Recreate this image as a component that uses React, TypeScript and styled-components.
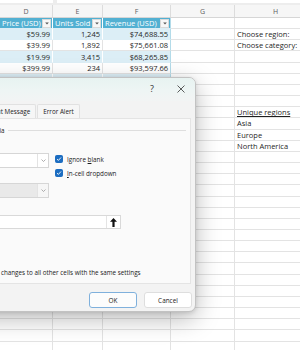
import React from "react";
import styled, { createGlobalStyle } from "styled-components";

const Global = createGlobalStyle`
  html, body { margin: 0; padding: 0; background: #ffffff; }
  body { width: 300px; height: 350px; overflow: hidden; font-family: "Open Sans", "Noto Sans", sans-serif; }
  #root { position: relative; width: 300px; height: 350px; overflow: hidden; }
`;

const COLS = [53, 50, 68, 64, 82];
const LETTERS = ["D", "E", "F", "G", "H"];
const ROW_H = 11.17;

type Kind = "head" | "band" | "plain" | "none";

const Sheet = styled.div`
  width: 300px;
  height: 350px;
  overflow: hidden;
  display: flex;
  flex-direction: column;
`;

const TopStrip = styled.div`
  height: 5px;
  flex-shrink: 0;
  background: #ededed;
  display: flex;
  gap: 4px;
  align-items: flex-start;
`;

const TopBox = styled.div<{ $w: number }>`
  width: ${(p) => p.$w}px;
  height: 3px;
  background: #ffffff;
  flex-shrink: 0;
`;

const ColHeaderRow = styled.div`
  display: flex;
  height: 13px;
  flex-shrink: 0;
  background: #f6f6f6;
  border-bottom: 1px solid #d6d6d6;
  box-sizing: border-box;
`;

const ColHeader = styled.div<{ $w: number }>`
  width: ${(p) => p.$w}px;
  flex-shrink: 0;
  box-sizing: border-box;
  border-right: 1px solid #dcdcdc;
  font-size: 7px;
  color: #5e5e5e;
  display: flex;
  align-items: center;
  justify-content: center;
`;

const GridRow = styled.div`
  display: flex;
  height: ${ROW_H}px;
  flex-shrink: 0;
`;

const Cell = styled.div<{ $w: number; $kind: Kind; $right?: boolean; $edge?: boolean }>`
  width: ${(p) => p.$w}px;
  flex-shrink: 0;
  box-sizing: border-box;
  display: flex;
  align-items: center;
  justify-content: ${(p) => (p.$right ? "flex-end" : "flex-start")};
  padding: 0 2px;
  font-size: 7.5px;
  white-space: nowrap;
  overflow: visible;
  color: ${(p) => (p.$kind === "head" ? "#ffffff" : "#1f1f1f")};
  background: ${(p) =>
    p.$kind === "head" ? "#52b0d2" : p.$kind === "band" ? "#dceef6" : "#ffffff"};
  border-bottom: 1px solid
    ${(p) => (p.$kind === "head" || p.$kind === "band" ? "#dceef6" : "#e3e3e3")};
  border-right: 1px solid
    ${(p) =>
      p.$edge
        ? "#b3dbe9"
        : p.$kind === "head" || p.$kind === "band"
        ? "#ffffff"
        : "#e3e3e3"};
`;

const Underlined = styled.span`
  text-decoration: underline;
  text-underline-offset: 1px;
`;

const FilterBtn = styled.div`
  margin-left: auto;
  margin-right: -1px;
  width: 9px;
  height: 9px;
  box-sizing: border-box;
  background: #f7f7f7;
  border: 1px solid #d9d9d9;
  display: flex;
  align-items: center;
  justify-content: center;
`;

/* ---------- Dialog ---------- */

const Dialog = styled.div`
  position: absolute;
  top: 77px;
  left: -62px;
  width: 258px;
  height: 235px;
  box-sizing: border-box;
  background: #f3f3f3;
  border: 1px solid #c2c2c2;
  border-radius: 7px;
  box-shadow: 0 7px 24px rgba(0, 0, 0, 0.27), 0 1px 4px rgba(0, 0, 0, 0.12);
  overflow: hidden;
  display: flex;
  flex-direction: column;
  font-family: "Open Sans", "Noto Sans", sans-serif;
  color: #1b1b1b;
`;

const TitleBar = styled.div`
  height: 23px;
  flex-shrink: 0;
  box-sizing: border-box;
  display: flex;
  align-items: flex-start;
  gap: 9px;
  padding: 5px 4px 0 8px;
  background: linear-gradient(180deg, #e7f3f1 0%, #eef5f4 55%, #f2f4f4 100%);
`;

const TitleText = styled.div`
  margin-right: auto;
  font-size: 6.8px;
  line-height: 11px;
`;

const TitleButton = styled.div`
  width: 20px;
  height: 11px;
  display: flex;
  align-items: center;
  justify-content: center;
  font-size: 9px;
  color: #333333;
`;

const TabStrip = styled.div`
  height: 17px;
  flex-shrink: 0;
  box-sizing: border-box;
  display: flex;
  align-items: flex-end;
  gap: 1px;
  padding: 0 0 0 6px;
`;

const Tab = styled.div<{ $active?: boolean }>`
  height: 14px;
  box-sizing: border-box;
  padding: 0 5px;
  font-size: 6.3px;
  line-height: 13px;
  white-space: nowrap;
  background: ${(p) => (p.$active ? "#fafafa" : "#f6f6f6")};
  border: 1px solid #e1e1e1;
  border-bottom: none;
  border-radius: 2px 2px 0 0;
`;

const Panel = styled.div`
  margin: 0 4px;
  height: 166px;
  flex-shrink: 0;
  box-sizing: border-box;
  background: #fafafa;
  border: 1px solid #e4e4e4;
  padding: 7px 4px 0 9px;
  display: flex;
  flex-direction: column;
`;

const GroupHeader = styled.div`
  display: flex;
  align-items: center;
  gap: 3px;
  height: 8px;
  font-size: 6.3px;
  white-space: nowrap;
`;

const GroupLine = styled.div`
  flex: 1;
  height: 1px;
  background: #dedede;
`;

const Criteria = styled.div`
  padding-left: 10px;
  display: flex;
  flex-direction: column;
`;

const FieldLabel = styled.div<{ $mt: number; $w?: number }>`
  margin-top: ${(p) => p.$mt}px;
  height: 9px;
  line-height: 9px;
  font-size: 6.3px;
  width: ${(p) => (p.$w ? `${p.$w}px` : "auto")};
  flex-shrink: 0;
`;

const FieldRow = styled.div<{ $mt: number; $h: number }>`
  display: flex;
  align-items: flex-start;
  margin-top: ${(p) => p.$mt}px;
  height: ${(p) => p.$h}px;
`;

const Select = styled.div<{ $disabled?: boolean }>`
  width: 86px;
  height: 15px;
  flex-shrink: 0;
  box-sizing: border-box;
  display: flex;
  background: ${(p) => (p.$disabled ? "#e9e9e9" : "#ffffff")};
  border: 1px solid #d6d6d6;
`;

const SelectValue = styled.div<{ $disabled?: boolean }>`
  flex: 1;
  font-size: 6.3px;
  line-height: 13px;
  padding-left: 3px;
  color: ${(p) => (p.$disabled ? "#8a8a8a" : "#1b1b1b")};
`;

const SelectButton = styled.div<{ $disabled?: boolean }>`
  width: 11px;
  box-sizing: border-box;
  border-left: 1px solid #e3e3e3;
  background: ${(p) => (p.$disabled ? "#f6f6f6" : "#ffffff")};
  display: flex;
  align-items: center;
  justify-content: center;
`;

const CheckItem = styled.label<{ $ml: number; $mt: number }>`
  display: flex;
  align-items: center;
  gap: 4px;
  margin-left: ${(p) => p.$ml}px;
  margin-top: ${(p) => p.$mt}px;
  height: 8px;
  font-size: 6.3px;
  white-space: nowrap;
`;

const Box = styled.span<{ $checked?: boolean }>`
  width: 8px;
  height: 8px;
  flex-shrink: 0;
  box-sizing: border-box;
  border-radius: 1.5px;
  background: ${(p) => (p.$checked ? "#1c6dc1" : "#ffffff")};
  border: 1px solid ${(p) => (p.$checked ? "#1c6dc1" : "#8a8a8a")};
  display: flex;
  align-items: center;
  justify-content: center;
`;

const SourceInput = styled.div`
  width: 158px;
  height: 14px;
  margin-top: 5px;
  box-sizing: border-box;
  display: flex;
  background: #ffffff;
  border: 1px solid #d9d9d9;
`;

const SourceValue = styled.div`
  flex: 1;
  font-size: 6.3px;
  line-height: 12px;
  padding-left: 3px;
`;

const RefButton = styled.div`
  width: 14px;
  box-sizing: border-box;
  border-left: 1px solid #e4e4e4;
  display: flex;
  align-items: center;
  justify-content: center;
`;

const Footer = styled.div`
  flex: 1;
  display: flex;
  justify-content: flex-end;
  align-items: flex-start;
  gap: 7px;
  padding: 8px 3px 0 0;
`;

const Button = styled.div<{ $primary?: boolean }>`
  width: 48px;
  height: 16px;
  box-sizing: border-box;
  border-radius: 3px;
  display: flex;
  align-items: center;
  justify-content: center;
  font-size: 6.4px;
  color: #1b1b1b;
  background: ${(p) => (p.$primary ? "#fcfcfc" : "#ffffff")};
  border: 1px solid ${(p) => (p.$primary ? "#7fb0dc" : "#dedede")};
`;

const Check = () => (
  <svg width="6" height="6" viewBox="0 0 6 6">
    <path d="M1 3.1 L2.4 4.4 L5 1.5" fill="none" stroke="#ffffff" strokeWidth="0.9" />
  </svg>
);

const Chevron = () => (
  <svg width="5" height="3" viewBox="0 0 5 3">
    <path d="M0.5 0.5 L2.5 2.5 L4.5 0.5" fill="none" stroke="#8c8c8c" strokeWidth="0.7" />
  </svg>
);

const Tri = () => (
  <svg width="4" height="3" viewBox="0 0 4 3">
    <path d="M0.2 0.4 L3.8 0.4 L2 2.5 Z" fill="#555555" />
  </svg>
);

const UpArrow = () => (
  <svg width="7" height="9" viewBox="0 0 7 9">
    <path d="M3.5 0 L7 3.8 L4.6 3.8 L4.6 9 L2.4 9 L2.4 3.8 L0 3.8 Z" fill="#111111" />
  </svg>
);

const CloseX = () => (
  <svg width="8" height="8" viewBox="0 0 8 8">
    <path d="M0.5 0.5 L7.5 7.5 M7.5 0.5 L0.5 7.5" stroke="#333333" strokeWidth="0.8" />
  </svg>
);

const table: string[][] = [
  ["$59.99", "1,245", "$74,688.55"],
  ["$39.99", "1,892", "$75,661.08"],
  ["$19.99", "3,415", "$68,265.85"],
  ["$399.99", "234", "$93,597.66"],
  ["$24.99", "2,130", "$53,228.70"],
];

const hCol: Record<number, React.ReactNode> = {
  1: "Choose region:",
  2: "Choose category:",
  8: <Underlined>Unique regions</Underlined>,
  9: "Asia",
  10: "Europe",
  11: "North America",
};

const TOTAL_ROWS = 31;
const headers = ["Price (USD)", "Units Sold", "Revenue (USD)"];

export default function App() {
  const rowIdx = Array.from({ length: TOTAL_ROWS }, (_, i) => i);

  return (
    <>
      <Global />
      <Sheet>
        <TopStrip>
          <TopBox $w={53} />
          <TopBox $w={260} />
        </TopStrip>
        <ColHeaderRow>
          {COLS.map((w, i) => (
            <ColHeader key={i} $w={w}>
              {LETTERS[i]}
            </ColHeader>
          ))}
        </ColHeaderRow>
        {rowIdx.map((r) => (
          <GridRow key={r}>
            {COLS.map((w, c) => {
              if (r === 0 && c < 3) {
                return (
                  <Cell key={c} $w={w} $kind="head" $edge={c === 2}>
                    {headers[c]}
                    <FilterBtn>
                      <Tri />
                    </FilterBtn>
                  </Cell>
                );
              }
              if (c < 3 && r > 0 && r <= table.length) {
                const kind: Kind = r % 2 === 1 ? "band" : "plain";
                return (
                  <Cell key={c} $w={w} $kind={kind} $right $edge={c === 2}>
                    {table[r - 1][c]}
                  </Cell>
                );
              }
              return (
                <Cell key={c} $w={w} $kind="none">
                  {c === 4 ? hCol[r] : null}
                </Cell>
              );
            })}
          </GridRow>
        ))}
      </Sheet>

      <Dialog>
        <TitleBar>
          <TitleText>Data Validation</TitleText>
          <TitleButton>?</TitleButton>
          <TitleButton>
            <CloseX />
          </TitleButton>
        </TitleBar>
        <TabStrip>
          <Tab $active>Settings</Tab>
          <Tab>Input Message</Tab>
          <Tab>Error Alert</Tab>
        </TabStrip>
        <Panel>
          <GroupHeader>
            Validation criteria
            <GroupLine />
          </GroupHeader>
          <Criteria>
            <FieldLabel $mt={6}>Allow:</FieldLabel>
            <FieldRow $mt={4} $h={15}>
              <Select>
                <SelectValue>List</SelectValue>
                <SelectButton>
                  <Chevron />
                </SelectButton>
              </Select>
              <CheckItem $ml={6} $mt={2}>
                <Box $checked>
                  <Check />
                </Box>
                <span>
                  Ignore <u>b</u>lank
                </span>
              </CheckItem>
            </FieldRow>
            <FieldRow $mt={0} $h={15}>
              <FieldLabel $mt={2} $w={86}>
                Data:
              </FieldLabel>
              <CheckItem $ml={6} $mt={1}>
                <Box $checked>
                  <Check />
                </Box>
                <span>
                  <u>I</u>n-cell dropdown
                </span>
              </CheckItem>
            </FieldRow>
            <Select $disabled>
              <SelectValue $disabled>between</SelectValue>
              <SelectButton $disabled>
                <Chevron />
              </SelectButton>
            </Select>
            <FieldLabel $mt={3}>Source:</FieldLabel>
            <SourceInput>
              <SourceValue>=$I$7:$I$9</SourceValue>
              <RefButton>
                <UpArrow />
              </RefButton>
            </SourceInput>
          </Criteria>
          <CheckItem $ml={0} $mt={39}>
            <Box />
            <span>Apply these changes to all other cells with the same settings</span>
          </CheckItem>
        </Panel>
        <Footer>
          <Button $primary>OK</Button>
          <Button>Cancel</Button>
        </Footer>
      </Dialog>
    </>
  );
}
